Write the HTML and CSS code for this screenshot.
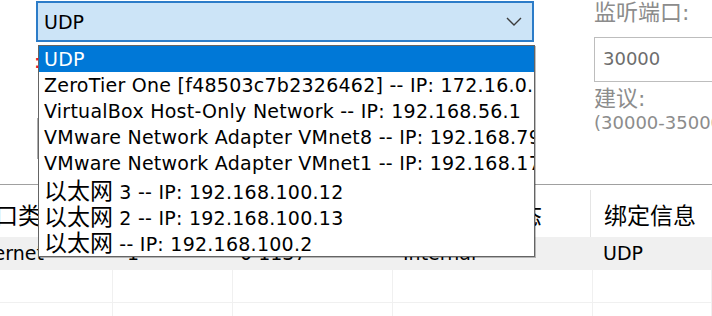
FILE: index.html
```html
<!DOCTYPE html>
<html lang="zh-CN">
<head>
    <meta charset="UTF-8">
    <title>端口绑定</title>
    <link rel="stylesheet" href="styles.css">
</head>
<body>

    <div class="top">
        <div class="form">
            <div class="combo">
                <span>UDP</span>
                <svg class="chevron" width="16" height="9" viewBox="0 0 16 9">
                    <polyline points="1,1 8,8 15,1" fill="none" stroke="#3c3c3c" stroke-width="1.4"/>
                </svg>
            </div>
            <div class="required">:</div>
            <div class="pick-btn">刷新网卡</div>
        </div>
        <div class="side">
            <div class="side-label">监听端口:</div>
            <div class="port-input">30000</div>
            <div class="side-note">
                <div class="note-cn">建议:</div>
                <div class="note-range">(30000-35000)</div>
            </div>
        </div>
    </div>

    <div class="grid">
        <div class="grid-row head">
            <div class="cell first-head">接口类型</div>
            <div class="cell">序号</div>
            <div class="cell">会话</div>
            <div class="cell">网络连接状态</div>
            <div class="cell">绑定信息</div>
        </div>
        <div class="grid-row body odd">
            <div class="cell first-body">Ethernet</div>
            <div class="cell">1</div>
            <div class="cell">0 1137</div>
            <div class="cell">Internal</div>
            <div class="cell">UDP</div>
        </div>
        <div class="grid-row body">
            <div class="cell"></div>
            <div class="cell"></div>
            <div class="cell"></div>
            <div class="cell"></div>
            <div class="cell"></div>
        </div>
        <div class="grid-row body">
            <div class="cell"></div>
            <div class="cell"></div>
            <div class="cell"></div>
            <div class="cell"></div>
            <div class="cell"></div>
        </div>
    </div>

    <!-- open dropdown of the combo box -->
    <ul class="dropdown">
        <li class="selected">UDP</li>
        <li>ZeroTier One [f48503c7b2326462] -- IP: 172.16.0.1</li>
        <li>VirtualBox Host-Only Network -- IP: 192.168.56.1</li>
        <li>VMware Network Adapter VMnet8 -- IP: 192.168.79.1</li>
        <li>VMware Network Adapter VMnet1 -- IP: 192.168.17.1</li>
        <li><span class="cjk">以太网</span> 3 -- IP: 192.168.100.12</li>
        <li><span class="cjk">以太网</span> 2 -- IP: 192.168.100.13</li>
        <li><span class="cjk">以太网</span> -- IP: 192.168.100.2</li>
    </ul>

</body>
</html>
```

FILE: styles.css
```css
* {
    box-sizing: border-box;
}
body {
    margin: 0;
    width: 712px;
    height: 316px;
    overflow: hidden;
    position: relative;
    background: #fff;
    color: #000;
    font-family: "DejaVu Sans", "Noto Sans CJK SC", sans-serif;
    font-size: 19px;
}
.top {
    display: flex;
    height: 184px;
}
.form {
    width: 594px;
    flex-shrink: 0;
    padding: 1px 0 0 36px;
}
.combo {
    width: 498px;
    height: 41px;
    border: 2px solid #2c7cc8;
    background: #cce4f7;
    display: flex;
    align-items: center;
    justify-content: space-between;
    padding: 0 10px 0 6px;
}
.required {
    height: 20px;
    margin: 9px 0 0 -2px;
    line-height: 20px;
    color: #e81123;
}
.pick-btn {
    width: 200px;
    height: 41px;
    margin: 47px 0 0 1px;
    border: 1px solid #adadad;
    background: #e1e1e1;
    font-size: 18px;
    line-height: 39px;
    text-align: center;
}
.side {
    width: 140px;
    flex-shrink: 0;
    color: #8c8c8c;
}
.side-label {
    height: 26px;
    line-height: 26px;
    font-size: 22px;
}
.port-input {
    height: 45px;
    margin-top: 11px;
    border: 1px solid #bdbdbd;
    padding-left: 8px;
    font-size: 18px;
    line-height: 41px;
    color: #6d6d6d;
}
.side-note {
    margin-top: 5px;
}
.note-cn {
    height: 24px;
    line-height: 24px;
    font-size: 22px;
}
.note-range {
    height: 24px;
    line-height: 24px;
    font-size: 18px;
    white-space: nowrap;
}
.grid {
    height: 132px;
    overflow: hidden;
    border-top: 1px solid #a0a0a0;
}
.grid-row {
    display: grid;
    grid-template-columns: 113px 120px 160px 200px 1fr;
}
.head .cell {
    height: 47px;
    margin-top: 5px;
    padding-left: 10px;
    display: flex;
    align-items: center;
    font-size: 23px;
    white-space: nowrap;
    overflow: hidden;
    border-left: 1px solid #e5e5e5;
}
.head .cell:first-child {
    border-left: none;
}
.head .cell:last-child {
    margin-left: -3px;
    padding-left: 13px;
}
.first-head {
    text-indent: -38px;
}
.body .cell {
    height: 33px;
    padding-left: 10px;
    line-height: 33px;
    white-space: nowrap;
    overflow: hidden;
    border-right: 1px solid #f0f0f0;
    border-bottom: 1px solid #f0f0f0;
}
.body .cell:nth-child(2) {
    padding-left: 14px;
}
.body .cell:nth-child(3) {
    padding-left: 7px;
}
.odd {
    background: #f0f0f0;
}
.first-body {
    text-indent: -48px;
}
.dropdown {
    position: absolute;
    left: 38px;
    top: 45px;
    width: 497px;
    height: 212px;
    margin: 0;
    padding: 0;
    list-style: none;
    background: #fff;
    border: 1px solid #646464;
    box-shadow: 1px 1px 0 rgba(0, 0, 0, 0.25);
    overflow: hidden;
}
.dropdown li {
    height: 26px;
    line-height: 26px;
    padding-left: 5px;
    letter-spacing: 0.25px;
    white-space: nowrap;
    overflow: hidden;
}
.dropdown li.selected {
    background: #0078d7;
    color: #fff;
}
.cjk {
    font-family: "Noto Sans CJK SC", sans-serif;
    font-size: 23px;
    letter-spacing: 0;
}
```
